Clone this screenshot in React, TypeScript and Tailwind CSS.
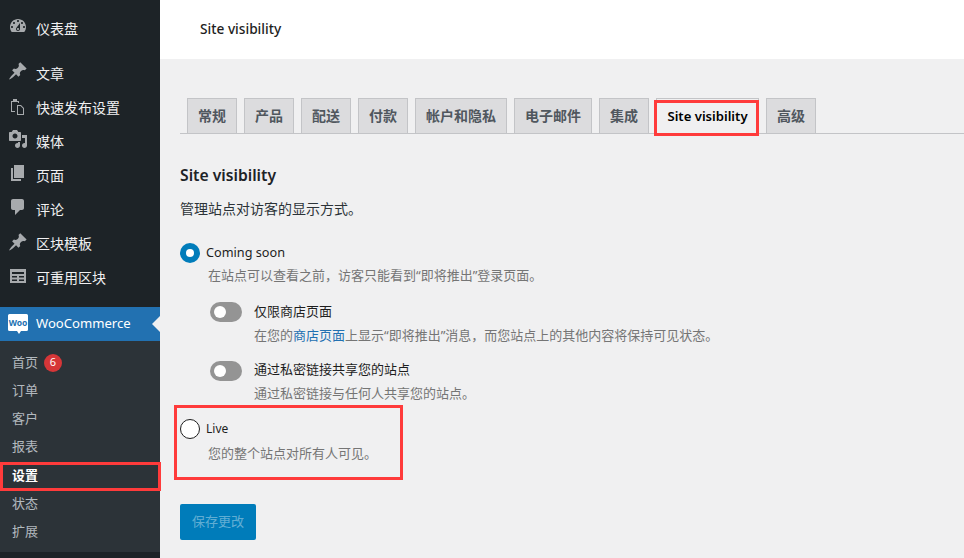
import type { ReactNode } from "react";

const font = "font-['Noto_Sans','Noto_Sans_CJK_SC',sans-serif]";

const pin =
  "M10.44 3.02l1.82-1.82 6.36 6.35-1.83 1.82c-1.05-.68-2.48-.57-3.41.36l-.75.75c-.92.93-1.04 2.35-.35 3.41l-1.83 1.82-2.41-2.41-2.8 2.79c-.42.42-3.38 2.71-3.8 2.29s1.86-3.39 2.28-3.81l2.79-2.79L4.1 9.36l1.83-1.82c1.05.69 2.48.57 3.4-.36l.75-.75c.93-.92 1.05-2.35.36-3.41z";
const dashboard =
  "M3.76 16h12.48c1.1-1.37 1.76-3.11 1.76-5 0-4.42-3.58-8-8-8s-8 3.58-8 8c0 1.89.66 3.63 1.76 5zM10 4c.55 0 1 .45 1 1s-.45 1-1 1-1-.45-1-1 .45-1 1-1zM6 6c.55 0 1 .45 1 1s-.45 1-1 1-1-.45-1-1 .45-1 1-1zm8 0c.55 0 1 .45 1 1s-.45 1-1 1-1-.45-1-1 .45-1 1-1zm-5.37 5.55L12 7v6c0 1.1-.9 2-2 2s-2-.9-2-2c0-.57.24-1.08.63-1.45zM4 10c.55 0 1 .45 1 1s-.45 1-1 1-1-.45-1-1 .45-1 1-1zm12 0c.55 0 1 .45 1 1s-.45 1-1 1-1-.45-1-1 .45-1 1-1zm-5 3c0-.55-.45-1-1-1s-1 .45-1 1 .45 1 1 1 1-.45 1-1z";
const media =
  "M13 11V4c0-.55-.45-1-1-1h-1.67L9 1H5L3.67 3H2c-.55 0-1 .45-1 1v7c0 .55.45 1 1 1h10c.55 0 1-.45 1-1zM7 4.5c1.38 0 2.5 1.12 2.5 2.5S8.38 9.5 7 9.5 4.5 8.38 4.5 7 5.62 4.5 7 4.5zM14 6h5v10.5c0 1.38-1.12 2.5-2.5 2.5S14 17.88 14 16.5s1.12-2.5 2.5-2.5c.17 0 .34.02.5.05V9h-3V6zm-4 8.05V13h2v3.5c0 1.38-1.12 2.5-2.5 2.5S7 17.88 7 16.5 8.12 14 9.5 14c.17 0 .34.02.5.05z";
const page = "M6 15V2h10v13H6zm-1 1h8v2H3V5h2v11z";
const comment =
  "M5 2h9c1.1 0 2 .9 2 2v7c0 1.1-.9 2-2 2h-2l-5 5v-5H5c-1.1 0-2-.9-2-2V4c0-1.1.9-2 2-2z";
const table =
  "M2 3h16v14H2V3zm2 3v2h12V6H4zm0 4v1.5h5V10H4zm7 0v1.5h5V10h-5zm-7 3.5V15h5v-1.5H4zm7 0V15h5v-1.5h-5z";
// two overlapping clipboards, outlines only
const clipboards =
  "M3 6h2V4h4v2h2v2h-1V7H4v9h3v1H3V6zM9 10h4l3 3v7H9v-1h6v-5.5L12.5 11H10v8H9v-9z";

const menu = [
  { label: "文章", icon: pin },
  { label: "快速发布设置", icon: clipboards },
  { label: "媒体", icon: media },
  { label: "页面", icon: page },
  { label: "评论", icon: comment },
  { label: "区块模板", icon: pin },
  { label: "可重用区块", icon: table },
];

const submenu = ["订单", "客户", "报表", "设置", "状态", "扩展"];

const tabs = ["常规", "产品", "配送", "付款", "帐户和隐私", "电子邮件", "集成", "Site visibility", "高级"];

function MenuRow({ label, icon }: { label: string; icon: string }) {
  return (
    <div className="flex h-[34.1px] items-center">
      <svg viewBox="0 0 20 20" className="mx-[8px] mt-[-4px] h-[20px] w-[20px] fill-[#a7aaad]">
        <path d={icon} />
      </svg>
      <span className="text-[14px] text-[#f0f0f1]">{label}</span>
    </div>
  );
}

function WooLogo() {
  return (
    <svg viewBox="0 0 20 20" className="h-[20px] w-[20px]">
      <path d="M1.5 0h17A1.5 1.5 0 0 1 20 1.5v14a1.5 1.5 0 0 1-1.5 1.5H13l-2 3-2-3H1.5A1.5 1.5 0 0 1 0 15.5v-14A1.5 1.5 0 0 1 1.5 0z" fill="#fff" />
      <text x="10" y="11.5" textAnchor="middle" fontSize="8.5" fontWeight="700" fill="#2271b1">
        Woo
      </text>
    </svg>
  );
}

function Sidebar() {
  return (
    <aside className="relative h-full w-[160px] shrink-0 bg-[#1d2327] pt-[11px]">
      <MenuRow label="仪表盘" icon={dashboard} />
      <div className="h-[10.9px]" />
      {menu.map((item) => (
        <MenuRow key={item.label} {...item} />
      ))}
      <div className="relative mt-[12.3px] flex h-[34px] items-center bg-[#2271b1] pl-[8px]">
        <WooLogo />
        <span className="ml-[8px] text-[13.1px] text-white">WooCommerce</span>
        <div className="absolute right-0 top-[9px] h-0 w-0 border-y-[8px] border-r-[8px] border-y-transparent border-r-[#f0f0f1]" />
      </div>
      <div className="bg-[#2c3338] pb-[6.5px] pt-[7.5px] text-[13px] text-[#f0f6fcb3]">
        <div className="flex h-[28.2px] items-center pl-[12px]">
          首页
          <span className="ml-[6px] flex h-[18px] w-[18px] items-center justify-center rounded-full bg-[#d63638] text-[11px] text-white">
            6
          </span>
        </div>
        {submenu.map((item) => (
          <div
            key={item}
            className={
              item === "设置"
                ? "flex h-[28.2px] items-center pl-[12px] font-semibold text-white"
                : "flex h-[28.2px] items-center pl-[12px]"
            }
          >
            {item}
          </div>
        ))}
      </div>
    </aside>
  );
}

function Radio({ checked }: { checked?: boolean }) {
  return checked ? (
    <span className="flex h-[20px] w-[20px] shrink-0 items-center justify-center rounded-full bg-[#007cba]">
      <span className="h-[8px] w-[8px] rounded-full bg-white" />
    </span>
  ) : (
    <span className="h-[20px] w-[20px] shrink-0 rounded-full border border-[#1e1e1e] bg-white" />
  );
}

function Toggle() {
  return (
    <span className="flex h-[20px] w-[32px] shrink-0 items-center rounded-full bg-[#949494] pl-[4px]">
      <span className="h-[12px] w-[12px] rounded-full bg-white" />
    </span>
  );
}

function ToggleRow({ title, toggleClass, children }: { title: string; toggleClass: string; children: ReactNode }) {
  return (
    <div className="ml-[30px] flex">
      <div className={toggleClass}>
        <Toggle />
      </div>
      <div className="ml-[12px]">
        <div className="h-[18px] text-[13px] leading-[18px] text-[#1e1e1e]">{title}</div>
        <div className="mt-[6px] text-[13px] leading-[18px] text-[#757575]">{children}</div>
      </div>
    </div>
  );
}

export default function App() {
  return (
    <div className={`relative flex h-[558px] w-[964px] overflow-hidden bg-[#f0f0f1] ${font}`}>
      <Sidebar />
      <main className="min-w-0 flex-1">
        <header className="flex h-[59px] items-center bg-white pl-[40px] text-[13.7px] font-medium text-[#1e1e1e]">
          Site visibility
        </header>
        <div className="pl-[20px]">
          <nav className="mt-[39px] flex h-[36px] gap-[7px] border-b border-[#c3c4c7] pl-[7px]">
            {tabs.map((tab) => (
              <div
                key={tab}
                className={
                  tab === "Site visibility"
                    ? "flex h-[36px] w-[103px] items-center justify-center border border-b-0 border-[#c3c4c7] bg-[#f0f0f1] text-[13.1px] font-semibold text-black"
                    : "flex h-[35px] items-center border border-b-0 border-[#c3c4c7] bg-[#dcdcde] px-[10px] pb-[2px] text-[14px] font-semibold text-[#50575e]"
                }
              >
                {tab}
              </div>
            ))}
          </nav>
          <h2 className="mt-[29px] text-[15.7px] font-semibold leading-[24px] text-[#1d2327]">Site visibility</h2>
          <p className="mt-[12px] text-[14px] leading-[20px] text-[#2c3338]">管理站点对访客的显示方式。</p>

          <div className="mt-[24px] flex items-center">
            <Radio checked />
            <span className="ml-[6px] text-[12.7px] text-[#1e1e1e]">Coming soon</span>
          </div>
          <div className="ml-[28px] mt-[3px] text-[13px] leading-[18px] text-[#757575]">
            在站点可以查看之前，访客只能看到“即将推出”登录页面。
          </div>

          <div className="mt-[18px]">
            <ToggleRow title="仅限商店页面" toggleClass="mt-0">
              在您的<span className="text-[#2271b1]">商店页面</span>上显示“即将推出”消息，而您站点上的其他内容将保持可见状态。
            </ToggleRow>
          </div>
          <div className="mt-[16px]">
            <ToggleRow title="通过私密链接共享您的站点" toggleClass="mt-[1px]">
              通过私密链接与任何人共享您的站点。
            </ToggleRow>
          </div>

          <div className="mt-[17px] flex items-center">
            <Radio />
            <span className="ml-[6px] text-[12px] text-[#1e1e1e]">Live</span>
          </div>
          <div className="ml-[28px] mt-[5px] text-[13px] leading-[18px] text-[#757575]">您的整个站点对所有人可见。</div>

          <button className="mt-[42px] flex h-[36px] w-[76px] items-center justify-center rounded-[2px] bg-[#007cba] text-[13px] text-[#ffffff66]">
            保存更改
          </button>
        </div>
      </main>

      {/* red annotation boxes drawn on top of the screenshot */}
      <div className="absolute left-0 top-[462px] h-[29px] w-[161px] border-[3px] border-[#ff3b3b]" />
      <div className="absolute left-[654px] top-[100px] h-[36px] w-[105px] border-[3px] border-[#ff3b3b]" />
      <div className="absolute left-[174px] top-[405px] h-[75px] w-[229px] border-[3px] border-[#ff3b3b]" />
    </div>
  );
}
